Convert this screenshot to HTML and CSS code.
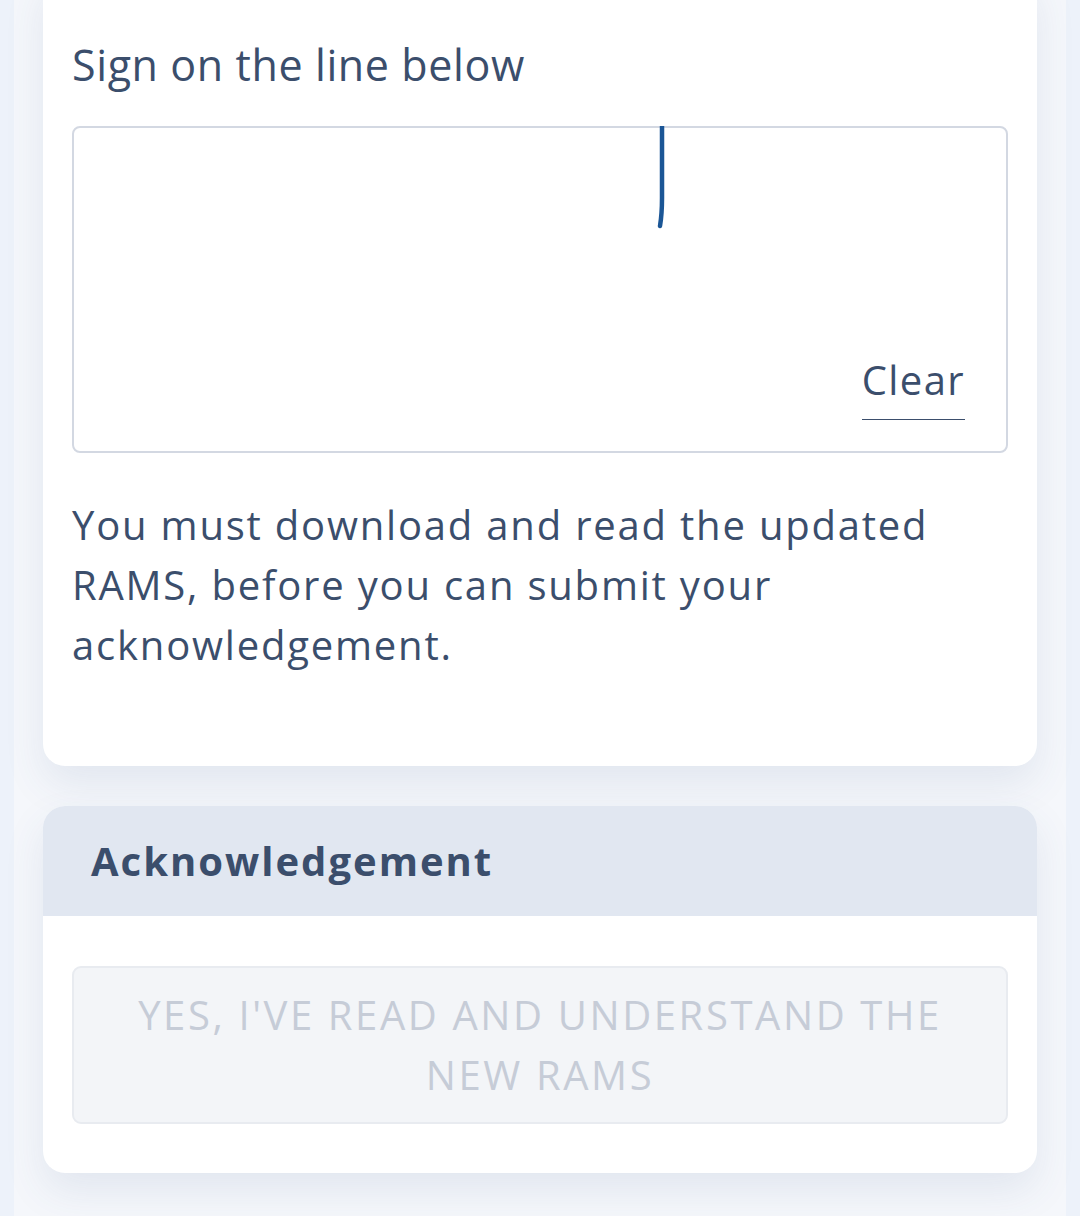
FILE: index.html
```html
<!DOCTYPE html>
<html lang="en">
<head>
<meta charset="utf-8">
<title>RAMS acknowledgement</title>
<link rel="stylesheet" href="styles.css">
</head>
<body>
<div class="page">
  <div class="column">
    <section class="card card-sign">
      <h2 class="sign-title">Sign on the line below</h2>
      <div class="sign-pad">
        <svg class="sign-stroke" width="936" height="327" viewBox="0 0 936 327" aria-hidden="true">
          <path d="M590 0 L590 72 Q590 88 588 100" fill="none" stroke="#1b5696" stroke-width="4.5" stroke-linecap="round"/>
        </svg>
        <button class="clear-btn" type="button">Clear</button>
      </div>
      <p class="sign-note">You must download and read the updated RAMS, before you can submit your acknowledgement.</p>
    </section>

    <section class="card card-ack">
      <header class="ack-header">
        <h3 class="ack-title">Acknowledgement</h3>
      </header>
      <div class="ack-body">
        <button class="ack-btn" type="button" disabled>YES, I'VE READ AND UNDERSTAND THE NEW RAMS</button>
      </div>
    </section>
  </div>
</div>
</body>
</html>
```

FILE: styles.css
```css
* { box-sizing: border-box; }

html, body {
  margin: 0;
  padding: 0;
}

body {
  background: #edf2fa;
  font-family: "Open Sans", "DejaVu Sans", sans-serif;
  color: #3b4e6c;
}

.page {
  padding: 0 14px;
  min-height: 1216px;
}

.column {
  background: #f5f7fb;
  min-height: 1216px;
  padding: 0 29px 60px;
  display: flex;
  flex-direction: column;
  gap: 40px;
}

.card {
  background: #ffffff;
  border-radius: 22px;
  box-shadow: 0 18px 40px rgba(60, 85, 140, 0.10);
  overflow: hidden;
}

.card-sign {
  margin-top: -30px;
  padding: 65px 29px 91px;
}

.sign-title {
  margin: 0;
  font-size: 43px;
  font-weight: 400;
  line-height: 60px;
  letter-spacing: 0.6px;
}

.sign-pad {
  position: relative;
  margin-top: 31px;
  height: 327px;
  border: 2px solid #d3d8e2;
  border-radius: 8px;
  background: #fff;
}

.sign-stroke {
  position: absolute;
  left: -2px;
  top: -2px;
}

.clear-btn {
  position: absolute;
  right: 41px;
  bottom: 31px;
  background: none;
  border: 0;
  border-bottom: 1.5px solid #3b4e6c;
  padding: 0 0 15px;
  margin: 0;
  font-family: inherit;
  font-size: 40px;
  line-height: 48px;
  letter-spacing: 1.4px;
  color: #3b4e6c;
}

.sign-note {
  margin: 42px 0 0;
  font-size: 40px;
  line-height: 60px;
  letter-spacing: 1.8px;
}

.ack-header {
  background: #e1e7f1;
  height: 110px;
  padding: 0 48px;
  display: flex;
  align-items: center;
}

.ack-title {
  margin: 0;
  font-size: 40px;
  font-weight: 700;
  line-height: 50px;
  letter-spacing: 2px;
}

.ack-body {
  padding: 50px 29px 49px;
}

.ack-btn {
  display: block;
  width: 100%;
  background: #f3f5f8;
  border: 2px solid #e8ebf0;
  border-radius: 9px;
  padding: 17px 40px;
  font-family: inherit;
  font-size: 40px;
  line-height: 60px;
  letter-spacing: 2.6px;
  color: #c6ccd7;
  text-align: center;
}
```
